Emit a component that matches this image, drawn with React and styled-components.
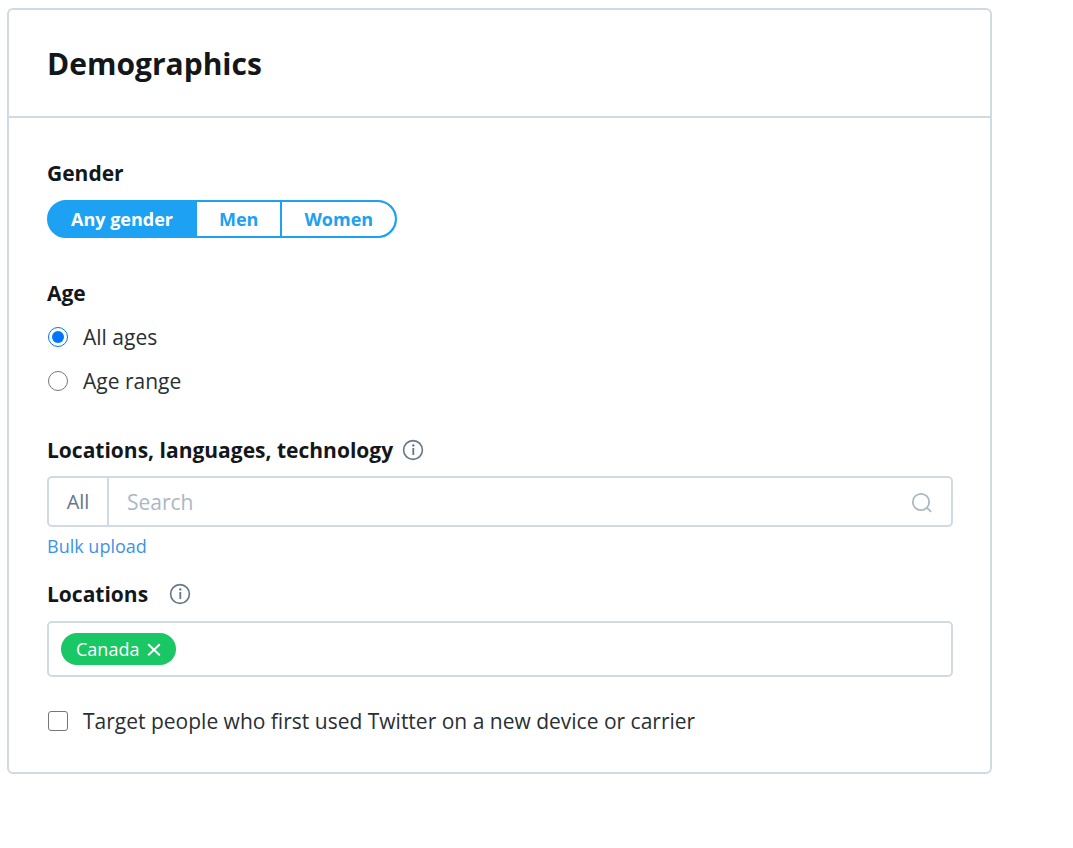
import React, { useState } from "react";
import styled, { createGlobalStyle } from "styled-components";

const GlobalStyle = createGlobalStyle`
  *, *::before, *::after { box-sizing: border-box; }
  body {
    margin: 0;
    background: #fff;
    color: #14171a;
    font-family: "Open Sans", "Noto Sans", sans-serif;
    font-size: 21px;
  }
  button, input { font: inherit; }
`;

const Page = styled.main`
  padding: 8px 81px 32px 7px;
`;

const Card = styled.section`
  border: 2px solid #d0dae3;
  border-radius: 6px;
`;

const CardHeader = styled.header`
  padding: 33px 38px 31px;
  border-bottom: 2px solid #d0dae3;
`;

const Title = styled.h1`
  margin: 0;
  font-size: 30px;
  line-height: 42px;
  font-weight: 700;
`;

const CardBody = styled.div`
  padding: 40px 37px 29px 38px;
`;

const Group = styled.fieldset`
  margin: 0 0 ${(p) => p.$gap}px;
  padding: 0;
  border: 0;
  min-width: 0;
`;

const FieldHeading = styled.div`
  display: flex;
  align-items: center;
  gap: ${(p) => p.$gap || 9}px;
  margin-bottom: ${(p) => p.$space}px;
`;

const FieldLabel = styled.label`
  font-size: 21px;
  line-height: 30px;
  font-weight: 700;
`;

const InfoButton = styled.button`
  display: flex;
  padding: 0;
  border: 0;
  background: none;
  color: #657786;
`;

const Segments = styled.div`
  display: inline-flex;
  vertical-align: top;
  height: 38px;
  border: 2px solid #1da1f2;
  border-radius: 19px;
  background: #1da1f2;
  overflow: hidden;
`;

const Segment = styled.button`
  padding: 0 22px;
  border: 0;
  border-left: ${(p) => (p.$divided ? "2px solid #1da1f2" : "0")};
  border-radius: ${(p) => (p.$last ? "0 17px 17px 0" : "0")};
  background: ${(p) => (p.$active ? "#1da1f2" : "#fff")};
  color: ${(p) => (p.$active ? "#fff" : "#1da1f2")};
  font-size: 18px;
  line-height: 34px;
  font-weight: 700;
`;

const Choice = styled.label`
  display: flex;
  align-items: center;
  gap: 14px;
  height: 44px;
  color: #292f33;
`;

const Radio = styled.input`
  appearance: none;
  display: grid;
  place-items: center;
  flex: none;
  width: 20px;
  height: 20px;
  margin: 0 1px;
  border: 1px solid #767676;
  border-radius: 50%;
  background: #fff;
  &:checked { border-color: #0075ff; }
  &:checked::after {
    content: "";
    width: 12px;
    height: 12px;
    border-radius: 50%;
    background: #0075ff;
  }
`;

const Checkbox = styled.input`
  appearance: none;
  flex: none;
  width: 20px;
  height: 20px;
  margin: 0 1px;
  border: 1px solid #767676;
  border-radius: 3px;
  background: #fff;
  &:checked { background: #0075ff; border-color: #0075ff; }
`;

const SearchBox = styled.div`
  display: flex;
  align-items: center;
  height: 51px;
  border: 2px solid #d0dae3;
  border-radius: 5px;
  color: #aab8c2;
`;

const Scope = styled.button`
  align-self: stretch;
  width: 60px;
  padding: 0;
  border: 0;
  border-right: 2px solid #d0dae3;
  background: none;
  color: #657786;
  font-size: 20px;
`;

const SearchInput = styled.input`
  flex: 1;
  min-width: 0;
  align-self: stretch;
  padding: 0 18px;
  border: 0;
  outline: 0;
  background: none;
  font-size: 21px;
  &::placeholder { color: #aab8c2; opacity: 1; }
`;

const SearchButton = styled.button`
  display: flex;
  margin-right: 18px;
  padding: 0;
  border: 0;
  background: none;
  color: #aab8c2;
`;

const BulkLink = styled.a`
  display: block;
  width: fit-content;
  margin: 6px 0 20px;
  color: #3b94e8;
  font-size: 18px;
  line-height: 26px;
  text-decoration: none;
`;

const TagBox = styled.div`
  display: flex;
  align-items: center;
  height: 56px;
  margin-bottom: 22px;
  padding: 0 12px;
  border: 2px solid #d0dae3;
  border-radius: 5px;
`;

const Tag = styled.span`
  display: flex;
  align-items: center;
  gap: 8px;
  height: 32px;
  padding: 0 15px;
  border-radius: 16px;
  background: #19c764;
  color: #fff;
  font-size: 18px;
`;

const RemoveButton = styled.button`
  display: flex;
  padding: 0;
  border: 0;
  background: none;
  color: inherit;
`;

function Info({ label }) {
  return (
    <InfoButton type="button" aria-label={label}>
      <svg width="22" height="22" viewBox="0 0 22 22" fill="none" stroke="currentColor">
        <circle cx="11" cy="11" r="9.4" strokeWidth="1.6" />
        <path d="M11.3 9v7" strokeWidth="1.8" />
        <circle cx="11.3" cy="6.4" r="1.2" fill="currentColor" stroke="none" />
      </svg>
    </InfoButton>
  );
}

const genders = ["Any gender", "Men", "Women"];
const ages = ["All ages", "Age range"];

export default function App() {
  const [gender, setGender] = useState(0);
  const [age, setAge] = useState(0);

  return (
    <>
      <GlobalStyle />
      <Page>
        <Card>
          <CardHeader>
            <Title>Demographics</Title>
          </CardHeader>
          <CardBody>
            <Group $gap={40} aria-labelledby="gender">
              <FieldHeading $space={12}>
                <FieldLabel as="span" id="gender">Gender</FieldLabel>
              </FieldHeading>
              <Segments>
                {genders.map((name, i) => (
                  <Segment
                    key={name}
                    type="button"
                    aria-pressed={gender === i}
                    $active={gender === i}
                    $divided={i > 0}
                    $last={i === genders.length - 1}
                    onClick={() => setGender(i)}
                  >
                    {name}
                  </Segment>
                ))}
              </Segments>
            </Group>

            <Group $gap={32} aria-labelledby="age">
              <FieldHeading $space={7}>
                <FieldLabel as="span" id="age">Age</FieldLabel>
              </FieldHeading>
              {ages.map((name, i) => (
                <Choice key={name}>
                  <Radio type="radio" name="age" checked={age === i} onChange={() => setAge(i)} />
                  {name}
                </Choice>
              ))}
            </Group>

            <FieldHeading $space={11}>
              <FieldLabel htmlFor="search">Locations, languages, technology</FieldLabel>
              <Info label="About locations, languages, technology" />
            </FieldHeading>
            <SearchBox>
              <Scope type="button">All</Scope>
              <SearchInput id="search" type="text" placeholder="Search" />
              <SearchButton type="button" aria-label="Search">
                <svg width="22" height="22" viewBox="0 0 22 22" fill="none" stroke="currentColor" strokeWidth="1.8">
                  <circle cx="10" cy="11" r="8.2" />
                  <path d="M15.4 16.4L20.2 20.8" />
                </svg>
              </SearchButton>
            </SearchBox>
            <BulkLink href="#bulk">Bulk upload</BulkLink>

            <FieldHeading $space={12} $gap={21}>
              <FieldLabel as="span">Locations</FieldLabel>
              <Info label="About locations" />
            </FieldHeading>
            <TagBox>
              <Tag>
                Canada
                <RemoveButton type="button" aria-label="Remove Canada">
                  <svg width="14" height="14" viewBox="0 0 14 14" fill="none" stroke="currentColor" strokeWidth="2">
                    <path d="M1.2 2.2L12.8 13.2M12.8 2.2L1.2 13.2" />
                  </svg>
                </RemoveButton>
              </Tag>
            </TagBox>
            <Choice>
              <Checkbox type="checkbox" />
              Target people who first used Twitter on a new device or carrier
            </Choice>
          </CardBody>
        </Card>
      </Page>
    </>
  );
}
